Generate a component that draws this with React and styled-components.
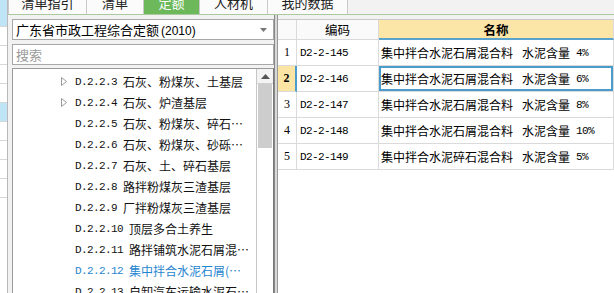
import React from "react";
import styled, { createGlobalStyle } from "styled-components";

const GlobalStyle = createGlobalStyle`
  html, body {
    margin: 0;
    padding: 0;
    background: #ffffff;
    overflow: hidden;
  }
  body {
    font-family: "Noto Sans CJK SC", "Noto Sans", sans-serif;
    font-size: 12px;
    color: #000;
  }
`;

const tabs = ["清单指引", "清单", "定额", "人材机", "我的数据"];
const tabWidths = [79, 57, 56, 68, 80];

const treeItems = [
  { code: "D.2.2.3", name: "石灰、粉煤灰、土基层", arrow: true },
  { code: "D.2.2.4", name: "石灰、炉渣基层", arrow: true },
  { code: "D.2.2.5", name: "石灰、粉煤灰、碎石…" },
  { code: "D.2.2.6", name: "石灰、粉煤灰、砂砾…" },
  { code: "D.2.2.7", name: "石灰、土、碎石基层" },
  { code: "D.2.2.8", name: "路拌粉煤灰三渣基层" },
  { code: "D.2.2.9", name: "厂拌粉煤灰三渣基层" },
  { code: "D.2.2.10", name: "顶层多合土养生" },
  { code: "D.2.2.11", name: "路拌铺筑水泥石屑混…" },
  { code: "D.2.2.12", name: "集中拌合水泥石屑(…", active: true },
  { code: "D.2.2.13", name: "自卸汽车运输水泥石…" },
];

const rows = [
  { code: "D2-2-145", name: "集中拌合水泥石屑混合料", unit: "水泥含量", pct: "4%" },
  { code: "D2-2-146", name: "集中拌合水泥石屑混合料", unit: "水泥含量", pct: "6%" },
  { code: "D2-2-147", name: "集中拌合水泥石屑混合料", unit: "水泥含量", pct: "8%" },
  { code: "D2-2-148", name: "集中拌合水泥石屑混合料", unit: "水泥含量", pct: "10%" },
  { code: "D2-2-149", name: "集中拌合水泥碎石混合料", unit: "水泥含量", pct: "5%" },
];

const stripRows = [
  { h: 27, blue: true },
  { h: 19 }, { h: 19 }, { h: 19 }, { h: 19 },
  { h: 19, blue: true },
  { h: 19 }, { h: 19 }, { h: 19 }, { h: 19 },
];

const App = () => {
  const selected = 1;
  return (
    <>
      <GlobalStyle />
      <Page>
        <Strip>
          {stripRows.map((r, i) => (
            <StripCell key={i} $blue={r.blue} style={{ height: r.h }} />
          ))}
        </Strip>
        <Main>
          <TabBar>
            {tabs.map((t, i) => (
              <Tab key={t} $active={i === 2} style={{ width: tabWidths[i] }}>
                {t}
              </Tab>
            ))}
          </TabBar>
          <Content>
            <LeftPanel>
              <Select>
                <span>
                  广东省市政工程综合定额<Small>(2010)</Small>
                </span>
                <Caret />
              </Select>
              <Search>搜索</Search>
              <TreeBox>
                <TreeList>
                  {treeItems.map((it) => (
                    <TreeRow key={it.code} $active={it.active}>
                      <Arrow>{it.arrow ? <ArrowIcon /> : null}</Arrow>
                      <Code>{it.code}</Code>
                      <span>{it.name}</span>
                    </TreeRow>
                  ))}
                </TreeList>
                <ScrollBar>
                  <ScrollButton>
                    <svg width="9" height="5" viewBox="0 0 9 5">
                      <path d="M0 5 L4.5 0 L9 5 Z" fill="#555" />
                    </svg>
                  </ScrollButton>
                  <Thumb />
                </ScrollBar>
              </TreeBox>
            </LeftPanel>
            <Splitter />
            <RightPanel>
              <Grid>
                <HeadCell />
                <HeadCell>编码</HeadCell>
                <HeadCell $name>名称</HeadCell>
                {rows.map((r, i) => (
                  <React.Fragment key={r.code}>
                    <NumCell $selected={i === selected}>{i + 1}</NumCell>
                    <CodeCell>{r.code}</CodeCell>
                    <NameCell $selected={i === selected}>
                      {r.name}
                      <Unit>{r.unit}</Unit>
                      <Pct>{r.pct}</Pct>
                    </NameCell>
                  </React.Fragment>
                ))}
              </Grid>
            </RightPanel>
          </Content>
        </Main>
      </Page>
    </>
  );
};

export default App;

const ArrowIcon = () => (
  <svg width="6" height="9" viewBox="0 0 6 9">
    <path d="M0.5 0.5 L5.5 4.5 L0.5 8.5 Z" fill="none" stroke="#9a9a9a" strokeWidth="1" />
  </svg>
);

const Caret = () => (
  <svg width="7" height="4" viewBox="0 0 7 4">
    <path d="M0 0 L7 0 L3.5 4 Z" fill="#777" />
  </svg>
);

const Page = styled.div`
  display: flex;
  width: 614px;
  height: 293px;
  overflow: hidden;
`;

const Strip = styled.div`
  width: 7px;
  flex-shrink: 0;
  border-right: 1px solid #b8b8b8;
  background: #fff;
  display: flex;
  flex-direction: column;
`;

const StripCell = styled.div`
  background: ${(p) => (p.$blue ? "#bfe4f6" : "#fff")};
  border-bottom: 1px solid #d6d6d6;
  box-sizing: border-box;
`;

const Main = styled.div`
  flex: 1;
  display: flex;
  flex-direction: column;
  min-width: 0;
  background: #f0f0f0;
`;

const TabBar = styled.div`
  display: flex;
  height: 24px;
  margin-top: -10px;
  background: #f2f2f2;
  border-bottom: 1px solid #a9c99e;
  flex-shrink: 0;
`;

const Tab = styled.div`
  box-sizing: border-box;
  display: flex;
  align-items: center;
  justify-content: center;
  font-size: 13px;
  color: ${(p) => (p.$active ? "#fff" : "#222")};
  background: ${(p) => (p.$active ? "#6cb85a" : "#fbfbfb")};
  border-right: 1px solid #c9c9c9;
  &:first-child {
    border-left: 1px solid #c9c9c9;
  }
`;

const Content = styled.div`
  flex: 1;
  display: flex;
  min-height: 0;
`;

const LeftPanel = styled.div`
  width: 266px;
  flex-shrink: 0;
  box-sizing: border-box;
  padding: 4px 0 0 4px;
  display: flex;
  flex-direction: column;
  gap: 3px;
  background: #f2f2f2;
`;

const Field = styled.div`
  height: 21px;
  box-sizing: border-box;
  border: 1px solid #a8a8a8;
  background: #fff;
  display: flex;
  align-items: center;
  padding: 0 3px;
  font-size: 12.5px;
  flex-shrink: 0;
`;

const Select = styled(Field)`
  justify-content: space-between;
  padding-right: 6px;
  margin-bottom: 1px;
  font-size: 13px;
`;

const Small = styled.span`
  font-family: "Liberation Sans", sans-serif;
  font-size: 12px;
  margin-left: 2px;
`;

const Search = styled(Field)`
  color: #9a9a9a;
  font-size: 13px;
`;

const TreeBox = styled.div`
  flex: 1;
  display: flex;
  border: 1px solid #9a9a9a;
  border-right: 1px solid #7a7a7a;
  border-bottom: none;
  background: #fff;
  min-height: 0;
  overflow: hidden;
`;

const TreeList = styled.div`
  flex: 1;
  padding-top: 2px;
  padding-left: 48px;
`;

const TreeRow = styled.div`
  height: 21px;
  display: flex;
  align-items: center;
  white-space: nowrap;
  font-size: 12px;
  color: ${(p) => (p.$active ? "#1f86cf" : "#111")};
`;

const Arrow = styled.span`
  width: 14px;
  display: flex;
  align-items: center;
`;

const Mono = styled.span`
  font-family: "Liberation Mono", monospace;
  font-size: 11px;
  letter-spacing: -0.6px;
`;

const Code = styled(Mono)`
  margin-right: 6px;
`;

const ScrollBar = styled.div`
  width: 16px;
  flex-shrink: 0;
  border-left: 1px solid #c6c6c6;
  display: flex;
  flex-direction: column;
  background: #fff;
`;

const ScrollButton = styled.div`
  height: 14px;
  display: flex;
  align-items: center;
  justify-content: center;
  background: #f4f4f4;
  border-bottom: 1px solid #d0d0d0;
`;

const Thumb = styled.div`
  height: 64px;
  background: #cdcdcd;
  margin: 0 1px;
`;

const Splitter = styled.div`
  width: 2px;
  flex-shrink: 0;
  background: #d8d8d8;
  border-left: 1px solid #888;
  border-right: 1px solid #999;
`;

const RightPanel = styled.div`
  flex: 1;
  padding-top: 4px;
  background: #fff;
  box-shadow: inset 0 4px 0 #f2f2f2;
`;

const Grid = styled.div`
  display: grid;
  grid-template-columns: 19px 82px 1fr;
  grid-template-rows: 20px repeat(5, 26px);
  border-top: 1px solid #c8c8c8;
`;

const Cell = styled.div`
  box-sizing: border-box;
  display: flex;
  align-items: center;
  border-right: 1px solid #dadada;
  border-bottom: 1px solid #dadada;
  white-space: nowrap;
  overflow: hidden;
`;

const HeadCell = styled(Cell)`
  justify-content: center;
  font-size: 12.5px;
  background: ${(p) => (p.$name ? "#fbe6a8" : "#fafafa")};
  font-weight: ${(p) => (p.$name ? 700 : 400)};
  border-bottom: ${(p) => (p.$name ? "2px solid #5aa3cf" : "1px solid #dadada")};
`;

const NumCell = styled(Cell)`
  justify-content: center;
  font-family: "Liberation Serif", serif;
  font-size: 12px;
  background: ${(p) => (p.$selected ? "#fce5a4" : "#fff")};
  font-weight: ${(p) => (p.$selected ? 700 : 400)};
  border-right: ${(p) => (p.$selected ? "2px solid #4c9ccb" : "1px solid #dadada")};
`;

const CodeCell = styled(Cell)`
  padding-left: 3px;
  font-family: "Liberation Mono", monospace;
  font-size: 11px;
  letter-spacing: -0.6px;
`;

const NameCell = styled(Cell)`
  padding-left: 2px;
  font-size: 12px;
  box-shadow: ${(p) => (p.$selected ? "inset 0 0 0 2px #4c9ccb" : "none")};
`;

const Unit = styled.span`
  margin-left: 9px;
`;

const Pct = styled(Mono)`
  margin-left: 6px;
`;
